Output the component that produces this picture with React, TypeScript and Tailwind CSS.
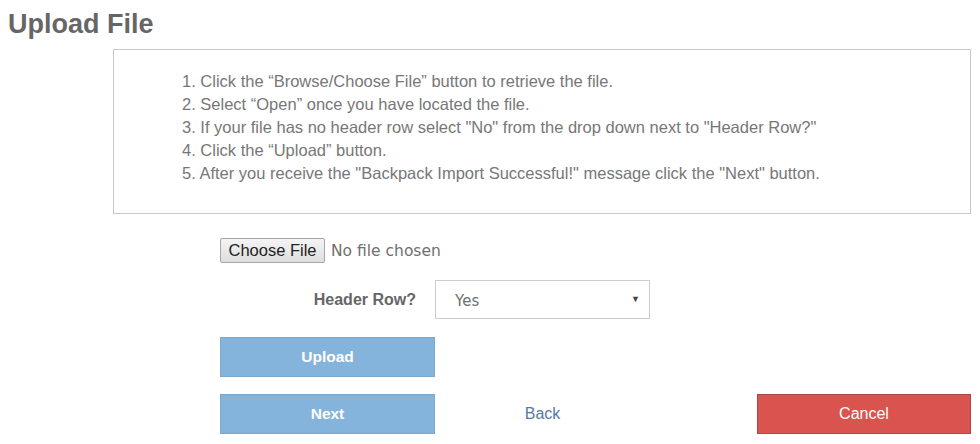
import React from "react";

export default function App() {
  const steps = [
    "1. Click the \u201cBrowse/Choose File\u201d button to retrieve the file.",
    "2. Select \u201cOpen\u201d once you have located the file.",
    "3. If your file has no header row select \"No\" from the drop down next to \"Header Row?\"",
    "4. Click the \u201cUpload\u201d button.",
    "5. After you receive the \"Backpack Import Successful!\" message click the \"Next\" button.",
  ];
  return (
    <div className="w-[980px] h-[444px] bg-white overflow-hidden font-['Liberation_Sans',Arial,sans-serif]">
      <h1 className="pl-[8px] pt-[8px] text-[27px] leading-[32px] font-bold text-[#666666]">Upload File</h1>
      <div className="ml-[113px] mt-[9px] w-[858px] h-[165px] border border-[#c8c8c8] pl-[68px] pt-[20px]">
        {steps.map((s) => (
          <div key={s} className="text-[16.5px] leading-[23px] text-[#777777]">
            {s}
          </div>
        ))}
      </div>
      <div className="ml-[220px] w-[751px]">
        <div className="mt-[24px] flex items-center h-[24px]">
          <div className="h-[25px] w-[105px] flex items-center justify-center border border-[#a6a6a6] rounded-[2px] bg-gradient-to-b from-[#f4f4f4] to-[#dedede] text-[16.5px] text-[#222222]">
            Choose File
          </div>
          <span className="ml-[6px] mt-[4px] text-[15.5px] text-[#707070] font-['DejaVu_Sans',sans-serif]">No file chosen</span>
        </div>
        <div className="mt-[18px] flex items-center">
          <div className="w-[215px] pr-[19px] text-right text-[16px] font-bold text-[#666666]">Header Row?</div>
          <div className="w-[215px] h-[39px] border border-[#cccccc] flex items-center pl-[19px] pr-[9px] pt-[4px] text-[15px] text-[#707070]">
            <span className="font-['DejaVu_Sans',sans-serif]">Yes</span>
            <span className="ml-auto mb-[4px] text-[9px] text-[#444444]">▼</span>
          </div>
        </div>
        <div className="mt-[18px] w-[215px] h-[40px] bg-[#84b3dc] border border-[#7aa8d0] flex items-center justify-center text-[15.5px] font-bold text-white">
          Upload
        </div>
        <div className="mt-[17px] flex items-center">
          <div className="w-[215px] h-[40px] bg-[#84b3dc] border border-[#7aa8d0] flex items-center justify-center text-[15.5px] font-bold text-white">
            Next
          </div>
          <div className="w-[215px] text-center text-[16px] text-[#56799f]">Back</div>
          <div className="ml-auto w-[214px] h-[40px] bg-[#d9534f] border border-[#b04744] flex items-center justify-center text-[16px] text-white">
            Cancel
          </div>
        </div>
      </div>
    </div>
  );
}
